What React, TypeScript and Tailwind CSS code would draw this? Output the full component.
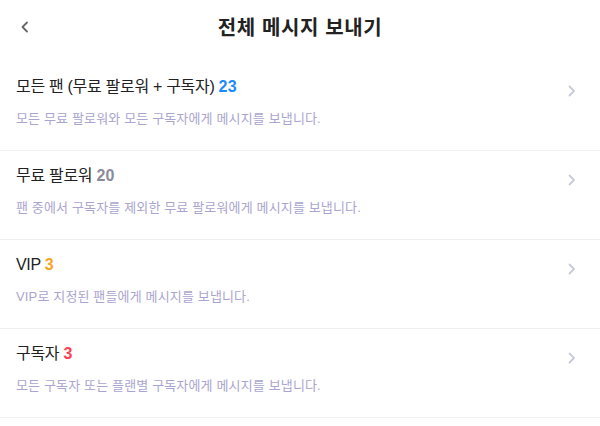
import React from "react";

const rows = [
  { title: "모든 팬 (무료 팔로워 + 구독자)", count: "23", color: "text-[#1a8bff]", desc: "모든 무료 팔로워와 모든 구독자에게 메시지를 보냅니다." },
  { title: "무료 팔로워", count: "20", color: "text-[#8a8a99]", desc: "팬 중에서 구독자를 제외한 무료 팔로워에게 메시지를 보냅니다." },
  { title: "VIP", count: "3", color: "text-[#f7a325]", desc: "VIP로 지정된 팬들에게 메시지를 보냅니다." },
  { title: "구독자", count: "3", color: "text-[#ff3d4f]", desc: "모든 구독자 또는 플랜별 구독자에게 메시지를 보냅니다." },
];

export default function App() {
  return (
    <div className="w-[600px] h-[426px] bg-white overflow-hidden" style={{ fontFamily: '"Liberation Sans", "Noto Sans CJK KR", sans-serif' }}>
      <div className="relative h-[62px] flex items-center justify-center pb-[6px]">
        <svg className="absolute left-[17px] top-[19px]" width="16" height="16" viewBox="0 0 16 16" fill="none">
          <path d="M10 3.5 L5.5 8 L10 12.5" stroke="#666" strokeWidth="1.8" strokeLinecap="round" strokeLinejoin="round" />
        </svg>
        <div className="text-[20px] font-bold text-[#222] leading-none tracking-[0.6px]">전체 메시지 보내기</div>
      </div>
      {rows.map((r, i) => (
        <div key={i} className="flex items-start h-[89px] border-b border-[#efeff1] pl-[16px] pr-[21px]">
          <div className="flex-1 pt-[14px]">
            <div className="text-[16px] leading-[22px] text-[#222] tracking-[-0.3px]">
              {r.title} <span className={`font-bold tracking-[0.3px] ${r.color}`}>{r.count}</span>
            </div>
            <div className="mt-[12px] text-[13px] leading-[18px] text-[#aaa5cf] tracking-[0.15px]">{r.desc}</div>
          </div>
          <svg className="mt-[21px]" width="14" height="16" viewBox="0 0 14 16" fill="none">
            <path d="M4.5 3.5 L9 8 L4.5 12.5" stroke="#c8cadb" strokeWidth="1.8" strokeLinecap="round" strokeLinejoin="round" />
          </svg>
        </div>
      ))}
    </div>
  );
}
